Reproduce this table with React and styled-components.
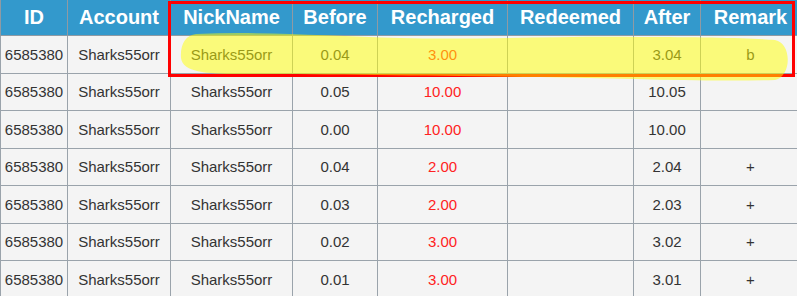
import React from "react";
import styled, { createGlobalStyle } from "styled-components";

const Global = createGlobalStyle`
  html, body { margin: 0; padding: 0; background: #ffffff; }
  body { font-family: "Liberation Sans", Arial, sans-serif; }
`;

const Frame = styled.div`
  position: relative;
  width: 797px;
  height: 296px;
  overflow: hidden;
`;

const Table = styled.table`
  border-collapse: collapse;
  table-layout: fixed;
  width: 800px;
  font-family: "Liberation Sans", Arial, sans-serif;
`;

const HeadCell = styled.th`
  height: 35px;
  padding: 0;
  background: #3399cc;
  color: #ffffff;
  font-size: 20px;
  font-weight: bold;
  text-align: center;
  border: 1px solid #8f9aa3;
  border-top: none;
`;

const Cell = styled.td`
  height: 36.5px;
  padding: 0;
  background: #f4f4f4;
  color: ${(p) => (p.$red ? "#ff2222" : "#333333")};
  font-size: 15px;
  text-align: center;
  border: 1px solid #9aa3ab;
  white-space: nowrap;
`;

const Highlight = styled.svg`
  position: absolute;
  left: 0;
  top: 0;
  pointer-events: none;
`;

const RedBox = styled.div`
  position: absolute;
  left: 168px;
  top: 1px;
  width: 621px;
  height: 70px;
  border: 3px solid #ff0000;
  pointer-events: none;
`;

const widths = [67, 103, 122, 85, 130, 126, 67, 100];
const headers = ["ID", "Account", "NickName", "Before", "Recharged", "Redeemed", "After", "Remark"];
const rows = [
  ["0.04", "3.00", "3.04", "b"],
  ["0.05", "10.00", "10.05", ""],
  ["0.00", "10.00", "10.00", ""],
  ["0.04", "2.00", "2.04", "+"],
  ["0.03", "2.00", "2.03", "+"],
  ["0.02", "3.00", "3.02", "+"],
  ["0.01", "3.00", "3.01", "+"],
];

export default function App() {
  return (
    <>
      <Global />
      <Frame>
        <Table>
          <colgroup>
            {widths.map((w, i) => (
              <col key={i} style={{ width: w }} />
            ))}
          </colgroup>
          <thead>
            <tr>
              {headers.map((h) => (
                <HeadCell key={h}>{h}</HeadCell>
              ))}
            </tr>
          </thead>
          <tbody>
            {rows.map((r, i) => (
              <tr key={i}>
                <Cell>6585380</Cell>
                <Cell>Sharks55orr</Cell>
                <Cell>Sharks55orr</Cell>
                <Cell>{r[0]}</Cell>
                <Cell $red>{r[1]}</Cell>
                <Cell></Cell>
                <Cell>{r[2]}</Cell>
                <Cell>{r[3]}</Cell>
              </tr>
            ))}
          </tbody>
        </Table>
        <RedBox />
        <Highlight width="797" height="296" viewBox="0 0 797 296">
          <path
            d="M196 34 C 260 31, 330 36, 400 38 C 470 40, 560 36, 640 37 C 700 37, 750 38, 775 40 C 792 43, 792 76, 775 80 C 700 82, 620 78, 540 77 C 440 76, 320 74, 240 74 C 205 74, 183 72, 181 58 C 180 44, 186 35, 196 34 Z"
            fill="rgba(255,255,0,0.5)"
          />
        </Highlight>
      </Frame>
    </>
  );
}
